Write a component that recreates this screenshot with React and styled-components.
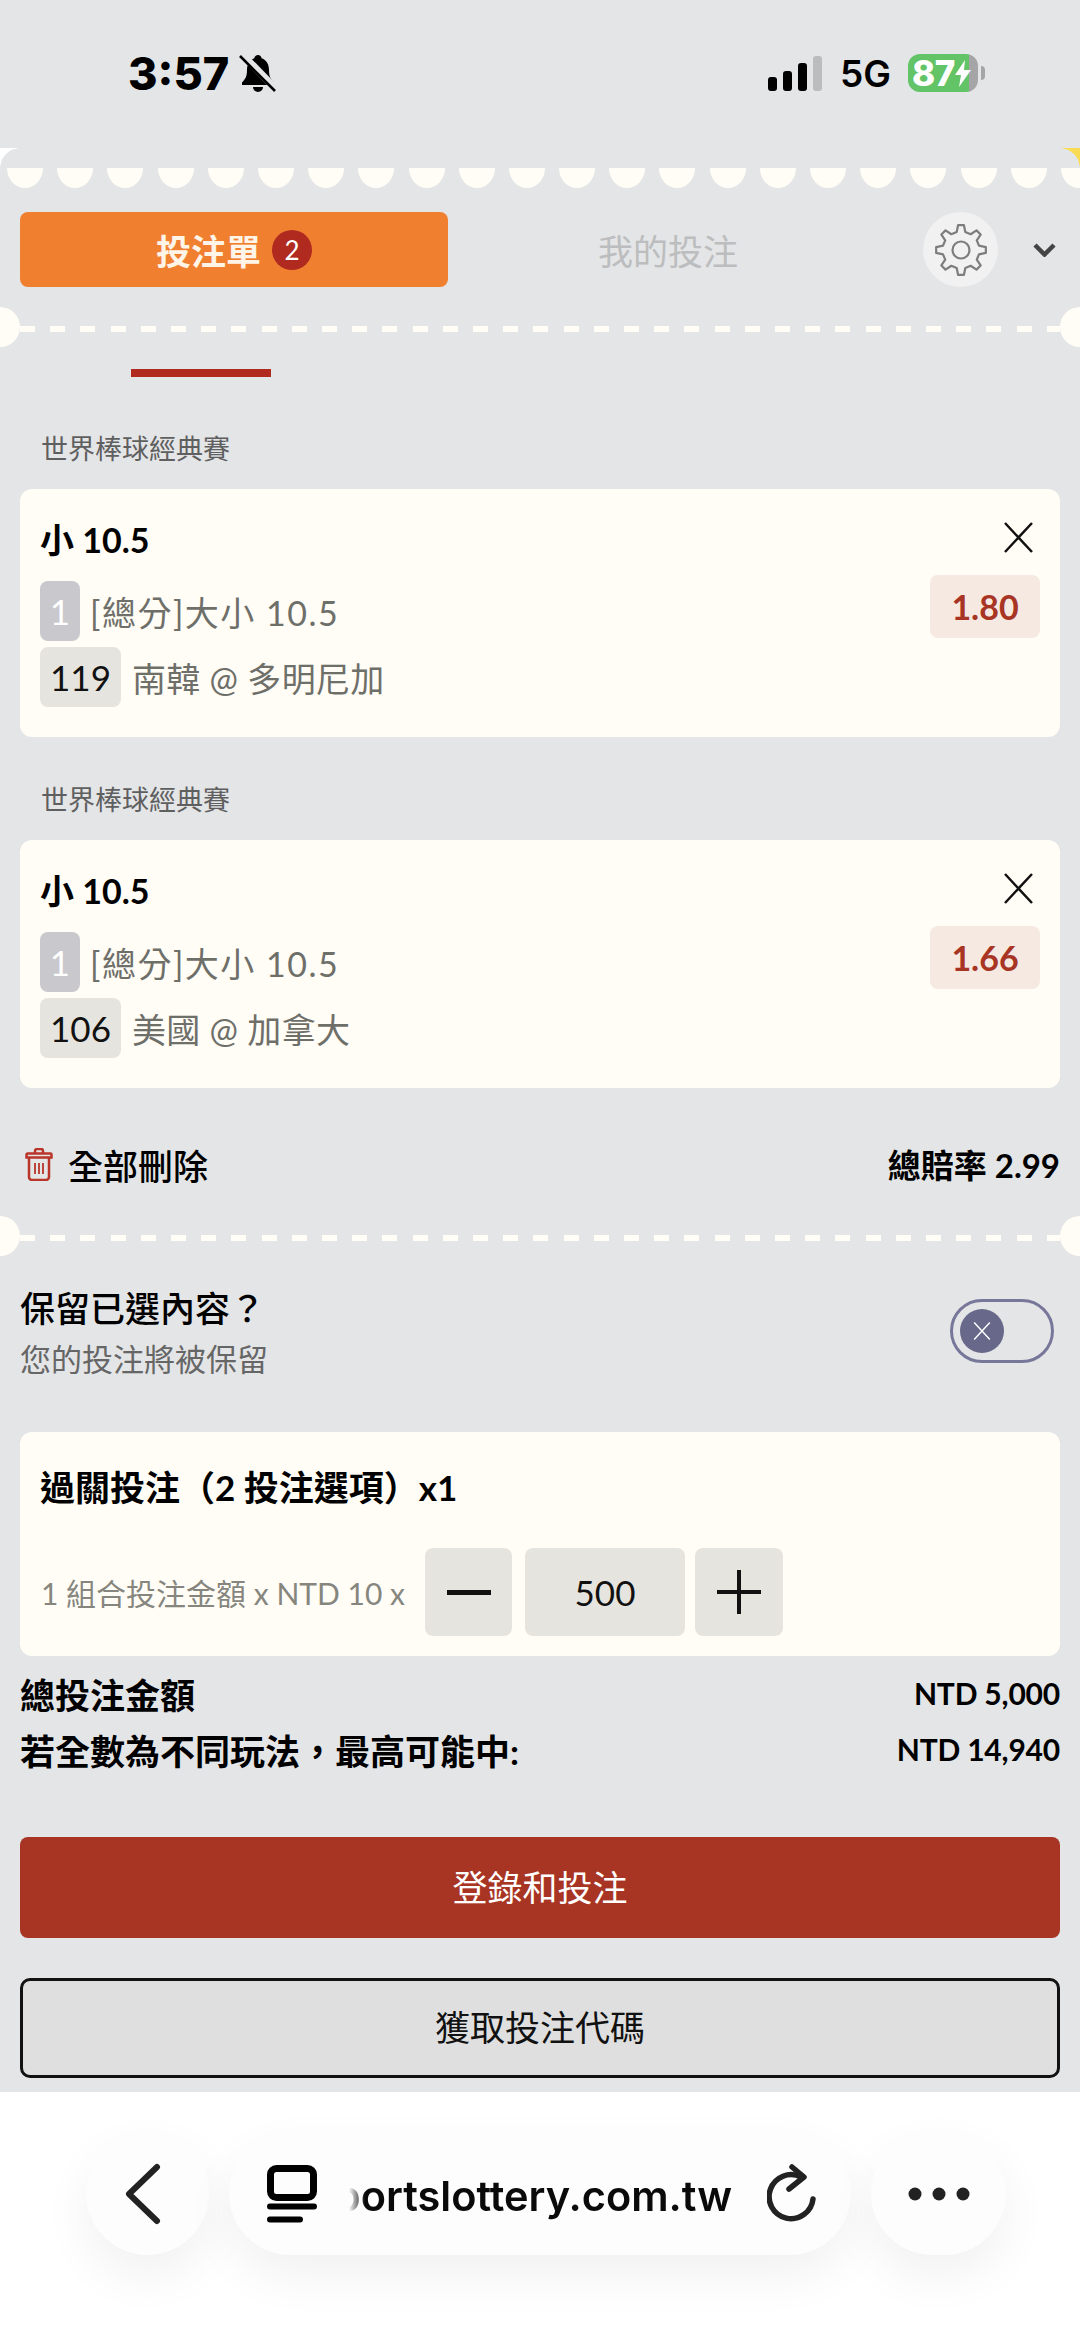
import React from "react";
import styled, { createGlobalStyle } from "styled-components";

const PANEL = "#e4e5e7";
const CREAM = "#fffdf6";
const RED = "#a83424";
const CHIP = "#e6e4de";

const GlobalStyle = createGlobalStyle`
  html, body { margin: 0; padding: 0; background: ${PANEL}; }
  * { box-sizing: border-box; }
`;

const Page = styled.div`
  width: 1080px;
  height: 2341px;
  display: flex;
  flex-direction: column;
  overflow: hidden;
  background: ${PANEL};
  color: #000;
  font-family: Lato, "Noto Sans CJK TC", sans-serif;
`;

/* status bar */
const StatusBar = styled.div`
  height: 148px;
  flex: none;
  display: flex;
  align-items: center;
  padding: 0 95px 2px 128px;
  font-family: Inter, sans-serif;
`;
const Clock = styled.div`
  font-size: 45px;
  font-weight: 800;
  line-height: 1;
  margin-right: 10px;
`;
const StatusRight = styled.div`
  margin-left: auto;
  display: flex;
  align-items: center;
`;
const Signal = styled.div`
  display: flex;
  align-items: flex-end;
  gap: 6px;
  height: 35px;
  margin-right: 18px;
`;
const SignalBar = styled.span`
  width: 9px;
  height: ${(p) => p.$h}px;
  border-radius: 3px;
  background: ${(p) => (p.$off ? "#bbbcbe" : "#000")};
`;
const Network = styled.div`
  font-size: 37px;
  font-weight: 600;
  line-height: 1;
  margin-right: 17px;
`;
const Battery = styled.div`
  width: 70px;
  height: 38px;
  border-radius: 12px;
  background: linear-gradient(90deg, #62c466 61px, #a5a5a8 61px);
  color: #fff;
  font-size: 35px;
  font-weight: 800;
  display: flex;
  align-items: center;
  padding-left: 4px;
  letter-spacing: -0.5px;
`;
const BatteryNub = styled.span`
  width: 4px;
  height: 14px;
  margin-left: 3px;
  border-radius: 0 4px 4px 0;
  background: #a5a5a8;
`;

/* main panel */
const Panel = styled.div`
  position: relative;
  flex: 1;
  padding-top: 20px;
`;
const Corner = styled.span`
  position: absolute;
  top: 0;
  ${(p) => (p.$right ? "right: 0;" : "left: 0;")}
  width: 20px;
  height: 20px;
  background: radial-gradient(
    circle at ${(p) => (p.$right ? "0 100%" : "100% 100%")},
    transparent 19.5px,
    ${(p) => (p.$right ? "#f9dc54" : "#ffffff")} 20px
  );
`;
const Scallops = styled.div`
  display: flex;
  gap: 14.2px;
  padding-left: 7px;
  overflow: hidden;
`;
const Scallop = styled.span`
  flex: none;
  width: 36px;
  height: 20px;
  background: ${CREAM};
  border-radius: 0 0 18px 18px / 0 0 20px 20px;
`;

const Tabs = styled.div`
  display: flex;
  align-items: center;
  margin-top: 24px;
  padding-left: 20px;
`;
const ActiveTab = styled.div`
  width: 428px;
  height: 75px;
  border-radius: 8px;
  background: #f08030;
  color: #fff4e8;
  font-size: 35px;
  font-weight: 700;
  display: flex;
  align-items: center;
  justify-content: center;
  gap: 11px;
`;
const CountBadge = styled.span`
  width: 40px;
  height: 40px;
  border-radius: 50%;
  background: #b02a1f;
  color: #fff;
  font-size: 26px;
  font-weight: 400;
  display: flex;
  align-items: center;
  justify-content: center;
`;
const IdleTab = styled.div`
  width: 440px;
  text-align: center;
  font-size: 35px;
  color: #bcbdbe;
`;
const GearButton = styled.div`
  width: 75px;
  height: 75px;
  margin-left: 35px;
  border-radius: 50%;
  background: #f1f1f2;
  display: flex;
  align-items: center;
  justify-content: center;
`;
const Caret = styled.svg`
  margin-left: 35px;
`;

const Divider = styled.div`
  position: relative;
  height: 6px;
  margin: ${(p) => p.$top}px 20px 0;
  background: repeating-linear-gradient(90deg, ${CREAM} 0 15px, transparent 15px 30.2px);
  &::before,
  &::after {
    content: "";
    position: absolute;
    top: -19px;
    width: 40px;
    height: 40px;
    border-radius: 50%;
    background: ${CREAM};
  }
  &::before { left: -40px; }
  &::after { right: -40px; }
`;
const RedMark = styled.div`
  width: 140px;
  height: 8px;
  margin: 37px 0 52px 131px;
  background: #b02a1f;
`;

/* tickets */
const Group = styled.section`
  margin: 43px 20px 0;
`;
const League = styled.div`
  height: 40px;
  line-height: 40px;
  padding-left: 21px;
  margin-bottom: 20px;
  font-size: 27px;
  color: #5f5f5f;
`;
const Card = styled.div`
  background: ${CREAM};
  border-radius: 12px;
  padding: 33px 20px 0;
  height: 248px;
`;
const CardHead = styled.div`
  display: flex;
  align-items: center;
  justify-content: space-between;
  height: 30px;
`;
const Pick = styled.div`
  font-size: 34px;
  font-weight: 700;
  line-height: 30px;
  padding-top: 5px;
`;
const CloseWrap = styled.span`
  display: flex;
  margin-right: 6px;
`;
const CardBody = styled.div`
  display: flex;
  justify-content: space-between;
  align-items: flex-start;
  margin-top: 23px;
`;
const Legs = styled.div`
  display: flex;
  flex-direction: column;
  gap: 6px;
  padding-top: 6px;
`;
const Leg = styled.div`
  display: flex;
  align-items: center;
  gap: 11px;
  height: 60px;
  font-size: 34px;
  color: #6f6f6a;
`;
const Market = styled.span`
  margin-left: -1px;
  letter-spacing: 1.5px;
`;
const Match = styled.span`
  letter-spacing: 0.3px;
`;
const Chip = styled.span`
  width: ${(p) => (p.$muted ? 40 : 81)}px;
  height: 60px;
  border-radius: 8px;
  background: ${(p) => (p.$muted ? "#c8c8cd" : CHIP)};
  color: ${(p) => (p.$muted ? "#fff" : "#111")};
  font-size: 35px;
  display: flex;
  align-items: center;
  justify-content: center;
`;
const Odds = styled.div`
  width: 110px;
  height: 63px;
  border-radius: 8px;
  background: #f5e9e2;
  color: ${RED};
  font-size: 34px;
  font-weight: 700;
  display: flex;
  align-items: center;
  justify-content: center;
`;

const DeleteRow = styled.div`
  display: flex;
  align-items: center;
  justify-content: space-between;
  height: 50px;
  margin: 51px 20px 0;
`;
const DeleteAll = styled.div`
  display: flex;
  align-items: center;
  gap: 15px;
  padding-left: 5px;
  font-size: 35px;
  font-weight: 500;
`;
const TotalOdds = styled.div`
  font-size: 33px;
  font-weight: 700;
`;

const KeepRow = styled.div`
  display: flex;
  justify-content: space-between;
  align-items: flex-start;
  margin: 48px 26px 0 20px;
`;
const KeepTitle = styled.div`
  font-size: 35px;
  font-weight: 500;
  line-height: 38px;
`;
const KeepHint = styled.div`
  font-size: 31px;
  line-height: 38px;
  margin-top: 13px;
  color: #666;
`;
const Toggle = styled.div`
  width: 104px;
  height: 64px;
  margin-top: 10px;
  border: 3px solid #77779a;
  border-radius: 32px;
  padding-left: 7px;
  display: flex;
  align-items: center;
`;
const Knob = styled.span`
  width: 44px;
  height: 44px;
  border-radius: 50%;
  background: #67688a;
  display: flex;
  align-items: center;
  justify-content: center;
`;

/* parlay */
const ParlayCard = styled.div`
  margin: 54px 20px 0;
  padding: 35px 20px 20px;
  border-radius: 12px;
  background: ${CREAM};
`;
const ParlayTitle = styled.div`
  font-size: 35px;
  font-weight: 700;
  line-height: 40px;
`;
const Stake = styled.div`
  display: flex;
  align-items: center;
  margin-top: 41px;
`;
const StakeLabel = styled.div`
  width: 385px;
  padding-left: 1px;
  font-size: 30px;
  color: #86867f;
  white-space: nowrap;
`;
const StepButton = styled.div`
  width: ${(p) => p.$w || 87}px;
  height: 88px;
  margin-left: ${(p) => p.$gap || 0}px;
  border-radius: 8px;
  background: ${CHIP};
  color: #111;
  font-size: 35px;
  display: flex;
  align-items: center;
  justify-content: center;
`;

const TotalRow = styled.div`
  display: flex;
  justify-content: space-between;
  align-items: center;
  height: 44px;
  margin: ${(p) => p.$top}px 20px 0;
  font-size: 35px;
  font-weight: 700;
`;
const TotalValue = styled.span`
  font-size: 30px;
  letter-spacing: -0.2px;
`;

const Submit = styled.div`
  height: 101px;
  margin: 66px 20px 0;
  padding-bottom: 5px;
  border-radius: 8px;
  background: ${RED};
  color: #fff;
  font-size: 35px;
  display: flex;
  align-items: center;
  justify-content: center;
`;
const CodeButton = styled.div`
  height: 100px;
  margin: 40px 20px 0;
  padding-bottom: 5px;
  border: 3px solid #111;
  border-radius: 10px;
  background: #dfdfdf;
  color: #111;
  font-size: 35px;
  display: flex;
  align-items: center;
  justify-content: center;
`;

/* browser toolbar */
const Browser = styled.div`
  height: 249px;
  flex: none;
  background: #fff;
  display: flex;
  align-items: flex-start;
  gap: 20px;
  padding: 40px 0 0 86px;
  font-family: Inter, sans-serif;
`;
const Pill = styled.div`
  width: ${(p) => p.$w}px;
  height: 123px;
  border-radius: 62px;
  background: #fdfdfd;
  box-shadow: 0 20px 50px rgba(0, 0, 0, 0.06);
  display: flex;
  align-items: center;
  justify-content: ${(p) => (p.$start ? "flex-start" : "center")};
  padding-left: ${(p) => (p.$start ? 38 : 0)}px;
`;
const UrlClip = styled.div`
  width: 383px;
  margin: 4px 35px 0 32px;
  display: flex;
  justify-content: flex-end;
  overflow: hidden;
  font-size: 41.5px;
  font-weight: 600;
  color: #0a0a0a;
  white-space: nowrap;
  mask-image: linear-gradient(90deg, transparent 0, #000 16px);
`;
const BackIcon = styled.svg`
  margin-right: 10px;
`;

function gearPath(cx, cy, outer, inner, teeth) {
  const pts = [];
  const step = (Math.PI * 2) / teeth;
  for (let i = 0; i < teeth; i++) {
    const a = -Math.PI / 2 + i * step;
    const at = (r, d) => [cx + r * Math.cos(a + d * step), cy + r * Math.sin(a + d * step)];
    pts.push(at(inner, -0.3), at(outer, -0.15), at(outer, 0.15), at(inner, 0.3));
  }
  return "M" + pts.map((p) => p[0].toFixed(2) + " " + p[1].toFixed(2)).join("L") + "Z";
}

const BellOff = () => (
  <svg width="38" height="38" viewBox="0 0 38 38">
    <path d="M19 1c-2 0-3.400 1.400-3.600 3.200C10 6 8 11 8 16c0 6-1.400 9-5 12.400V31h32v-2.600C31.400 25 30 22 30 16c0-5-2-10-7.400-11.800C22.400 2.400 21 1 19 1z" />
    <path d="M14 33a5 5 0 0 0 10 0z" />
    <line x1="3" y1="0" x2="37" y2="35" stroke={PANEL} strokeWidth="7" />
    <line x1="1" y1="2" x2="36" y2="37" stroke="#000" strokeWidth="2.600" />
  </svg>
);

const Trash = () => (
  <svg width="28" height="33" viewBox="0 0 28 33" fill="none" stroke="#b9352a" strokeWidth="2.500">
    <path d="M10 5V3a2 2 0 0 1 2-2h4a2 2 0 0 1 2 2v2" />
    <path d="M1.500 9.500V6.500a1 1 0 0 1 1-1h23a1 1 0 0 1 1 1v3z" />
    <path d="M4 10v19a3 3 0 0 0 3 3h14a3 3 0 0 0 3-3V10" />
    <path d="M10 15v11M14 15v11M18 15v11" strokeWidth="1.800" />
  </svg>
);

const Cross = ({ size = 31, color = "#111", weight = 2.5 }) => (
  <svg width={size} height={size} viewBox="0 0 31 31" stroke={color} strokeWidth={weight}>
    <path d="M2 1l27 29M29 1L2 30" />
  </svg>
);

const tickets = [
  { code: "119", match: "南韓 @ 多明尼加", odds: "1.80" },
  { code: "106", match: "美國 @ 加拿大", odds: "1.66" },
];

function Ticket({ code, match, odds }) {
  return (
    <Group>
      <League>世界棒球經典賽</League>
      <Card>
        <CardHead>
          <Pick>小 10.5</Pick>
          <CloseWrap>
            <Cross />
          </CloseWrap>
        </CardHead>
        <CardBody>
          <Legs>
            <Leg>
              <Chip $muted>1</Chip>
              <Market>[總分]大小 10.5</Market>
            </Leg>
            <Leg>
              <Chip>{code}</Chip>
              <Match>{match}</Match>
            </Leg>
          </Legs>
          <Odds>{odds}</Odds>
        </CardBody>
      </Card>
    </Group>
  );
}

export default function App() {
  return (
    <Page>
      <GlobalStyle />
      <StatusBar>
        <Clock>3:57</Clock>
        <BellOff />
        <StatusRight>
          <Signal>
            <SignalBar $h={14} />
            <SignalBar $h={20} />
            <SignalBar $h={28} />
            <SignalBar $h={35} $off />
          </Signal>
          <Network>5G</Network>
          <Battery>
            87
            <svg width="16" height="27" viewBox="0 0 16 27" fill="#fff">
              <path d="M10 0L0 15h6l-2 12L16 10H9z" />
            </svg>
          </Battery>
          <BatteryNub />
        </StatusRight>
      </StatusBar>

      <Panel>
        <Corner />
        <Corner $right />
        <Scallops>
          {Array.from({ length: 22 }, (_, i) => (
            <Scallop key={i} />
          ))}
        </Scallops>

        <Tabs>
          <ActiveTab>
            投注單
            <CountBadge>2</CountBadge>
          </ActiveTab>
          <IdleTab>我的投注</IdleTab>
          <GearButton>
            <svg width="54" height="54" viewBox="0 0 54 54" fill="none" stroke="#7d7d7d" strokeWidth="2.200" strokeLinejoin="round">
              <path d={gearPath(27, 27, 25, 18.5, 8)} />
              <circle cx="27" cy="27" r="8.500" />
            </svg>
          </GearButton>
          <Caret width="23" height="14" viewBox="0 0 23 14" fill="none" stroke="#444" strokeWidth="4.500">
            <path d="M2 2l9.500 9.500L21 2" />
          </Caret>
        </Tabs>

        <Divider $top={39} />
        <RedMark />

        {tickets.map((t) => (
          <Ticket key={t.code} {...t} />
        ))}

        <DeleteRow>
          <DeleteAll>
            <Trash />
            全部刪除
          </DeleteAll>
          <TotalOdds>總賠率 2.99</TotalOdds>
        </DeleteRow>

        <Divider $top={46} />

        <KeepRow>
          <div>
            <KeepTitle>保留已選內容？</KeepTitle>
            <KeepHint>您的投注將被保留</KeepHint>
          </div>
          <Toggle>
            <Knob>
              <Cross size={18} color="#fff" weight={2.5} />
            </Knob>
          </Toggle>
        </KeepRow>

        <ParlayCard>
          <ParlayTitle>過關投注（2 投注選項）x1</ParlayTitle>
          <Stake>
            <StakeLabel>1 組合投注金額 x NTD 10 x</StakeLabel>
            <StepButton>
              <svg width="44" height="5" viewBox="0 0 44 5">
                <rect width="44" height="5" fill="#111" />
              </svg>
            </StepButton>
            <StepButton $w={160} $gap={13}>500</StepButton>
            <StepButton $w={88} $gap={10}>
              <svg width="44" height="44" viewBox="0 0 44 44">
                <path d="M0 20h44v4H0zM20 0h4v44h-4z" fill="#111" />
              </svg>
            </StepButton>
          </Stake>
        </ParlayCard>

        <TotalRow $top={15}>
          <span>總投注金額</span>
          <TotalValue>NTD 5,000</TotalValue>
        </TotalRow>
        <TotalRow $top={12}>
          <span>若全數為不同玩法，最高可能中:</span>
          <TotalValue>NTD 14,940</TotalValue>
        </TotalRow>

        <Submit>登錄和投注</Submit>
        <CodeButton>獲取投注代碼</CodeButton>
      </Panel>

      <Browser>
        <Pill $w={123}>
          <BackIcon width="36" height="62" viewBox="0 0 36 62" fill="none" stroke="#222" strokeWidth="6" strokeLinecap="round" strokeLinejoin="round">
            <path d="M32 4L4 31l28 27" />
          </BackIcon>
        </Pill>
        <Pill $w={622} $start>
          <svg width="50" height="58" viewBox="0 0 50 58" fill="none" stroke="#000" strokeLinecap="round">
            <rect x="3.500" y="3.500" width="43" height="29" rx="6" strokeWidth="7" />
            <path d="M3 41.500h44M3 54.500h30" strokeWidth="6" />
          </svg>
          <UrlClip>sportslottery.com.tw</UrlClip>
          <svg width="50" height="60" viewBox="0 0 50 60" fill="none" stroke="#222" strokeWidth="5.500" strokeLinecap="round" strokeLinejoin="round">
            <path d="M34 13A22 22 0 1 0 46 35" />
            <path d="M25 3l12 10-15 12" />
          </svg>
        </Pill>
        <Pill $w={135}>
          <svg width="62" height="14" viewBox="0 0 62 14" fill="#222">
            <circle cx="7" cy="7" r="6.500" />
            <circle cx="31" cy="7" r="6.500" />
            <circle cx="55" cy="7" r="6.500" />
          </svg>
        </Pill>
      </Browser>
    </Page>
  );
}
